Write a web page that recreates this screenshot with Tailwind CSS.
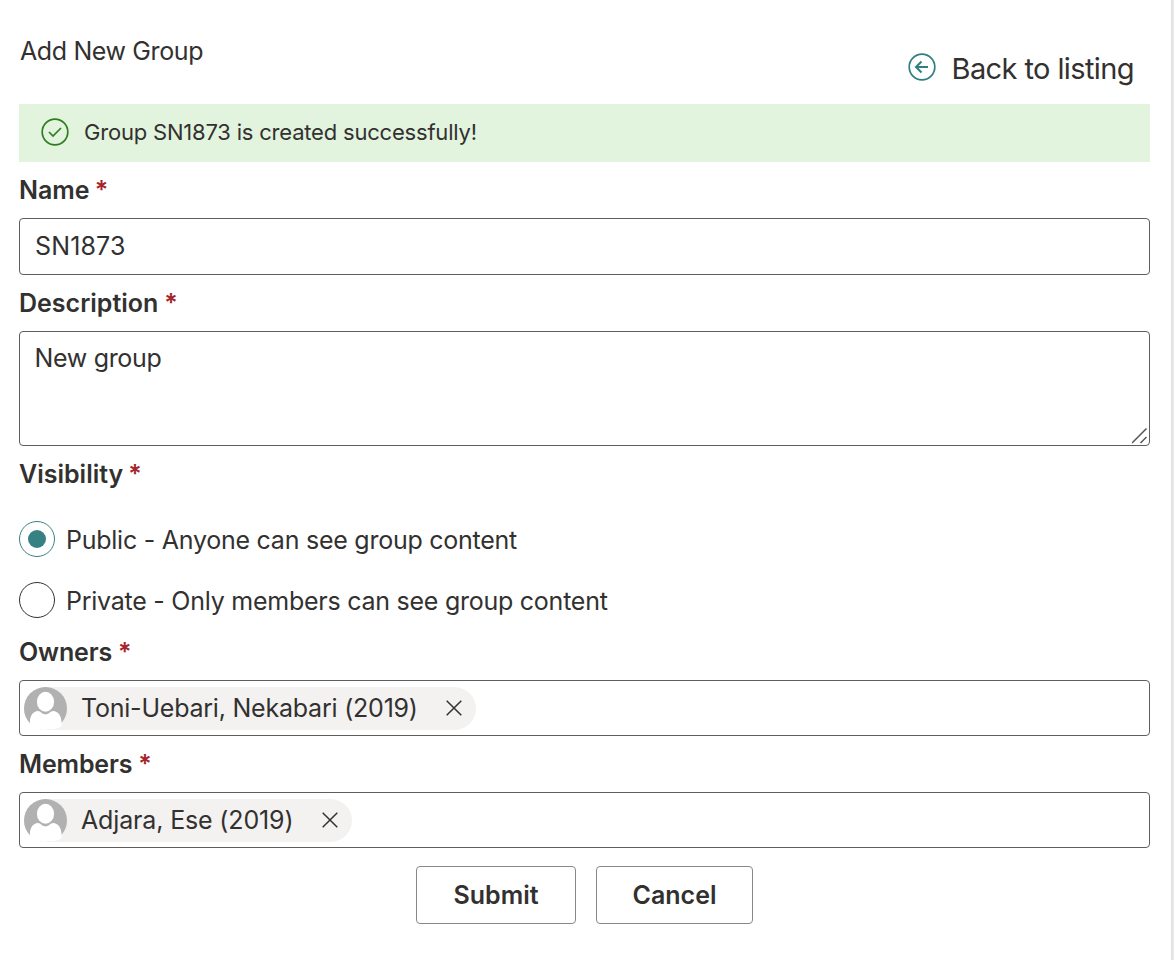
<!DOCTYPE html>
<html lang="en">
<head>
<meta charset="utf-8">
<title>Add New Group</title>
<script src="https://cdn.jsdelivr.net/npm/@tailwindcss/browser@4"></script>
</head>
<body class="bg-white font-['Inter',sans-serif] text-[#323130] text-[25px] leading-[30px]">
<div class="flex h-[960px] w-[1174px] overflow-hidden">
<main class="w-[1171px] pl-[19px] pr-[21px]">
  <header class="flex h-[104px] justify-between pl-px pr-4">
    <h1 class="pt-9"><span class="tracking-[-0.380px]">Add New Group</span></h1>
    <a class="flex pt-[53px]">
      <svg class="mr-4 size-7" viewBox="0 0 28 28" fill="none" stroke="#2f7f82" stroke-width="1.7"><circle cx="14" cy="14" r="12.8"/><path d="M20 14H8.5M13.5 8.5L8 14l5.500 5.500" stroke-width="2"/></svg>
      <span class="text-[29px] leading-8 tracking-[-0.6px]">Back to listing</span>
    </a>
  </header>
  <div class="flex h-[58px] items-center bg-[#e2f4de] pl-[22px]">
    <svg class="mr-[15px] size-7 -mt-0.5" viewBox="0 0 28 28" fill="none" stroke="#2f7d22" stroke-width="1.700"><circle cx="14" cy="14" r="12.800"/><path d="M8 14l4 4 8-8"/></svg>
    <span class="pb-0.5 text-[22px] tracking-[-0.2px]">Group SN1873 is created successfully!</span>
  </div>
  <label class="flex h-14 gap-1 pt-[13px] font-semibold"><span>Name</span><span class="pl-px text-[#a4262c]">*</span></label>
  <div class="flex h-[57px] items-center rounded-[4px] border border-[#605e5c] pb-0.5 pl-[15px]"><span class="tracking-[0.150px]">SN1873</span></div>
  <label class="flex h-14 gap-1 pt-[13px] font-semibold"><span>Description</span><span class="pl-[2px] text-[#a4262c]">*</span></label>
  <div class="relative h-[115px] rounded-[4px] border border-[#605e5c] pt-[11px] pl-[14.500px]"><span class="tracking-[-0.330px]">New group</span>
    <svg class="absolute right-px bottom-px size-4" viewBox="0 0 16 16" fill="none" stroke="#555" stroke-width="1.500"><path d="M0 15L14.500 .5M8.500 15l6-6"/></svg>
  </div>
  <label class="flex h-[75px] gap-1 pt-[13px] font-semibold"><span>Visibility</span><span class="pl-px text-[#a4262c]">*</span></label>
  <div class="flex h-9 items-center gap-[11px]"><span class="flex size-9 items-center justify-center rounded-full border border-[#38817f]"><span class="size-[18px] rounded-full bg-[#378084]"></span></span><span class="pt-0.5 tracking-[-0.250px]">Public - Anyone can see group content</span></div>
  <div class="mt-[25px] flex h-9 items-center gap-[11px]"><span class="size-9 rounded-full border border-[#323130]"></span><span class="pt-0.5 tracking-[-0.250px]">Private - Only members can see group content</span></div>
  <label class="flex h-[62px] gap-1 pt-[19px] font-semibold"><span class="tracking-[-0.150px]">Owners</span><span class="pl-[2px] text-[#a4262c]">*</span></label>
  <div class="flex h-14 items-center rounded-[4px] border border-[#605e5c] pl-1">
    <div class="flex h-[43px] w-[452px] items-center justify-between rounded-full bg-[#f3f2f1] pr-[14px]">
      <div class="flex items-center gap-[14px]"><svg class="size-[43px]" viewBox="0 0 43 43"><circle cx="21.500" cy="21.500" r="21.500" fill="#b1b1b1"/><path d="M6 39c-.6-6 .2-13.500 7-15 4.500-.3 4 3.300 8.500 3.300s4-3.600 8.500-3.300c6.800 1.500 8.100 9 7.500 15-4 5-27 5.500-31.500 0z" fill="#fff"/><ellipse cx="21.500" cy="14.700" rx="8.600" ry="10" fill="#fff"/></svg><span class="tracking-[-0.220px]">Toni-Uebari, Nekabari (2019)</span></div>
      <svg class="size-4" viewBox="0 0 16 16" stroke="#323130" stroke-width="1.500"><path d="M.7.7l14.600 14.600M15.300.7L.7 15.300"/></svg>
    </div>
  </div>
  <label class="flex h-14 gap-1 pt-[13px] font-semibold"><span class="tracking-[-0.150px]">Members</span><span class="pl-[2px] text-[#a4262c]">*</span></label>
  <div class="flex h-14 items-center rounded-[4px] border border-[#605e5c] pl-1">
    <div class="flex h-[43px] w-[328px] items-center justify-between rounded-full bg-[#f3f2f1] pr-[14px]">
      <div class="flex items-center gap-[14px]"><svg class="size-[43px]" viewBox="0 0 43 43"><circle cx="21.500" cy="21.500" r="21.500" fill="#b1b1b1"/><path d="M6 39c-.6-6 .2-13.500 7-15 4.500-.3 4 3.300 8.500 3.300s4-3.600 8.500-3.300c6.800 1.500 8.100 9 7.500 15-4 5-27 5.500-31.500 0z" fill="#fff"/><ellipse cx="21.500" cy="14.700" rx="8.600" ry="10" fill="#fff"/></svg><span class="tracking-[-0.150px]">Adjara, Ese (2019)</span></div>
      <svg class="size-4" viewBox="0 0 16 16" stroke="#323130" stroke-width="1.500"><path d="M.7.7l14.600 14.600M15.300.7L.7 15.300"/></svg>
    </div>
  </div>
  <div class="mt-[18px] flex justify-center gap-5 font-semibold">
    <button class="h-[58px] w-40 rounded-[4px] border border-[#8a8886]">Submit</button>
    <button class="h-[58px] w-[157px] rounded-[4px] border border-[#8a8886]">Cancel</button>
  </div>
</main>
<div class="w-[3px] bg-linear-to-r from-[#dedede] to-[#ececec]"></div>
</div>
</body>
</html>
